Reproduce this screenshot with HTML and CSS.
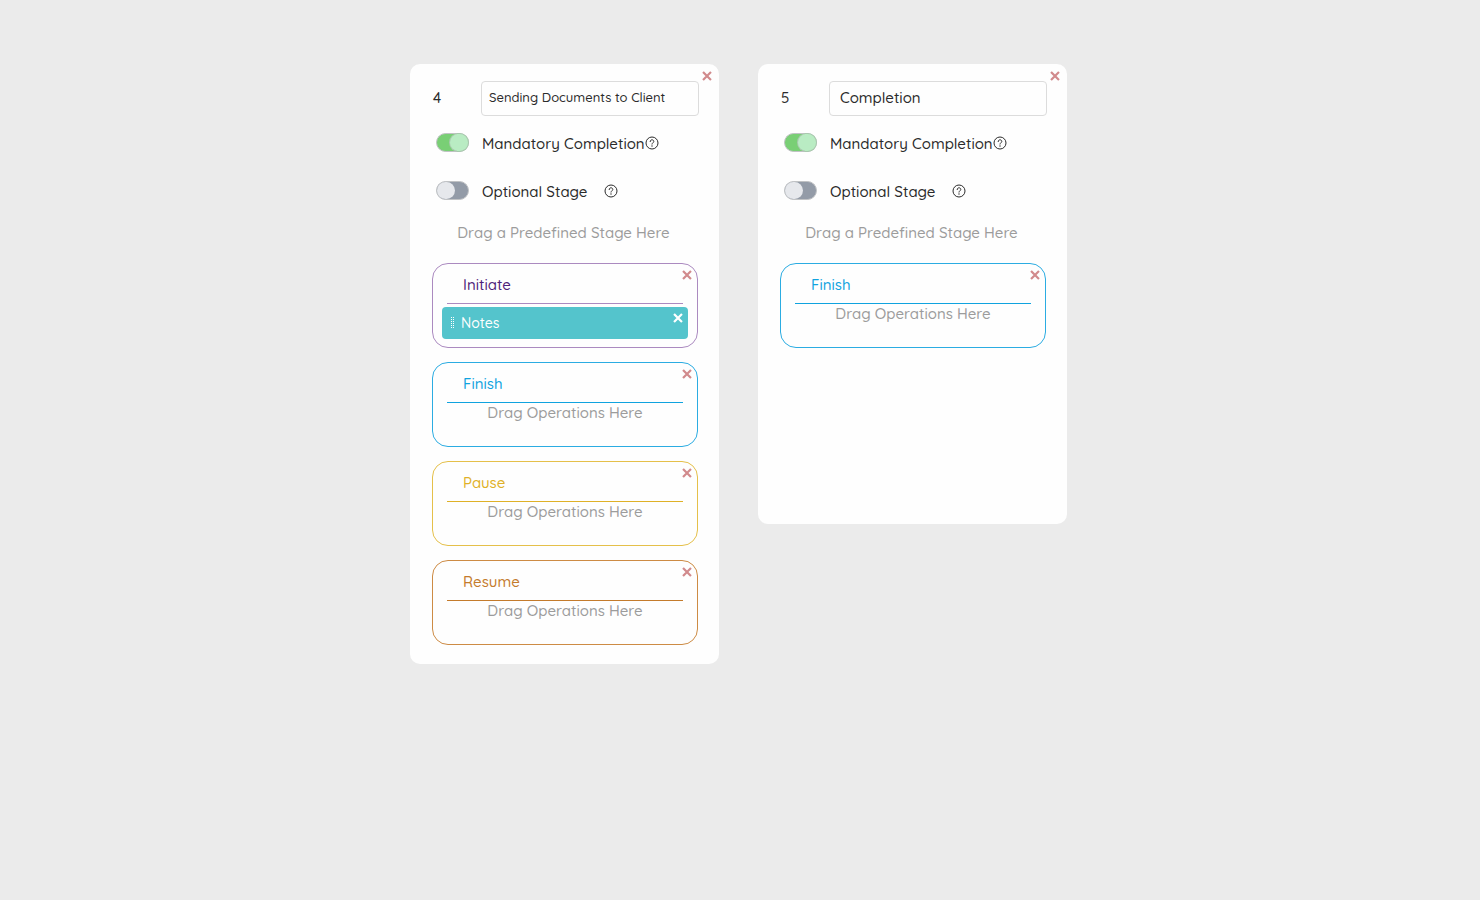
FILE: index.html
```html
<!DOCTYPE html>
<html lang="en">
	<head>
		<meta charset="UTF-8">
		<meta name="viewport" content="width=device-width, initial-scale=1.0">
		<title>Stages</title>
		<link rel="stylesheet" href="styles.css">
	</head>
	<body>
		<svg class="sprite" aria-hidden="true">
			<symbol id="icon-close" viewBox="0 0 10 10">
				<path d="M1.8 1.8 8.2 8.2M8.2 1.8 1.8 8.2" fill="none" stroke="currentColor" stroke-width="2.2" stroke-linecap="square"/>
			</symbol>
			<symbol id="icon-help" viewBox="0 0 14 14">
				<circle cx="7" cy="7" r="6" fill="none" stroke="currentColor"/>
				<path d="M5.2 5.6c0-1.1.8-1.8 1.8-1.8s1.8.7 1.8 1.6c0 1.3-1.7 1.4-1.8 2.7" fill="none" stroke="currentColor" stroke-linecap="round"/>
				<circle cx="7" cy="10" r=".7" fill="currentColor"/>
			</symbol>
			<symbol id="icon-grip" viewBox="0 0 5 12">
				<path d="M1.5 0v12M3.5 0v12" fill="none" stroke="currentColor" stroke-dasharray="1 1"/>
			</symbol>
		</svg>
		<main class="board">
			<section class="card">
				<button class="close card-close" type="button" aria-label="Remove stage 4"><svg><use href="#icon-close"/></svg></button>
				<div class="card-header">
					<label class="card-number" for="name_4">4</label>
					<input class="card-name card-name-long" id="name_4" type="text" value="Sending Documents to Client">
				</div>
				<div class="option">
					<input class="toggle" id="mandatory_4" type="checkbox" checked>
					<label class="option-label" for="mandatory_4">Mandatory Completion</label>
					<button class="help" type="button" aria-label="About mandatory completion"><svg><use href="#icon-help"/></svg></button>
				</div>
				<div class="option">
					<input class="toggle" id="optional_4" type="checkbox">
					<label class="option-label" for="optional_4">Optional Stage</label>
					<button class="help" type="button" aria-label="About optional stage"><svg><use href="#icon-help"/></svg></button>
				</div>
				<p class="card-hint">Drag a Predefined Stage Here</p>
				<div class="stages">
					<div class="stage stage-initiate">
						<button class="close stage-close" type="button" aria-label="Remove Initiate"><svg><use href="#icon-close"/></svg></button>
						<h2 class="stage-title">Initiate</h2>
						<div class="operation">
							<svg class="grip"><use href="#icon-grip"/></svg>
							<span class="operation-name">Notes</span>
							<button class="close operation-close" type="button" aria-label="Remove Notes"><svg><use href="#icon-close"/></svg></button>
						</div>
					</div>
					<div class="stage stage-finish">
						<button class="close stage-close" type="button" aria-label="Remove Finish"><svg><use href="#icon-close"/></svg></button>
						<h2 class="stage-title">Finish</h2>
						<p class="stage-hint">Drag Operations Here</p>
					</div>
					<div class="stage stage-pause">
						<button class="close stage-close" type="button" aria-label="Remove Pause"><svg><use href="#icon-close"/></svg></button>
						<h2 class="stage-title">Pause</h2>
						<p class="stage-hint">Drag Operations Here</p>
					</div>
					<div class="stage stage-resume">
						<button class="close stage-close" type="button" aria-label="Remove Resume"><svg><use href="#icon-close"/></svg></button>
						<h2 class="stage-title">Resume</h2>
						<p class="stage-hint">Drag Operations Here</p>
					</div>
				</div>
			</section>
			<section class="card">
				<button class="close card-close" type="button" aria-label="Remove stage 5"><svg><use href="#icon-close"/></svg></button>
				<div class="card-header">
					<label class="card-number" for="name_5">5</label>
					<input class="card-name" id="name_5" type="text" value="Completion">
				</div>
				<div class="option">
					<input class="toggle" id="mandatory_5" type="checkbox" checked>
					<label class="option-label" for="mandatory_5">Mandatory Completion</label>
					<button class="help" type="button" aria-label="About mandatory completion"><svg><use href="#icon-help"/></svg></button>
				</div>
				<div class="option">
					<input class="toggle" id="optional_5" type="checkbox">
					<label class="option-label" for="optional_5">Optional Stage</label>
					<button class="help" type="button" aria-label="About optional stage"><svg><use href="#icon-help"/></svg></button>
				</div>
				<p class="card-hint">Drag a Predefined Stage Here</p>
				<div class="stages">
					<div class="stage stage-finish">
						<button class="close stage-close" type="button" aria-label="Remove Finish"><svg><use href="#icon-close"/></svg></button>
						<h2 class="stage-title">Finish</h2>
						<p class="stage-hint">Drag Operations Here</p>
					</div>
				</div>
			</section>
		</main>
	</body>
</html>
```
FILE: styles.css
```css
* {
	box-sizing: border-box;
}
body {
	margin: 0;
	background: #ebebeb;
	color: #2b2b2b;
	font-family: Quicksand, Comfortaa, Inter, sans-serif;
	font-size: 15px;
	font-weight: 500;
	line-height: 20px;
}
.sprite {
	display: none;
}
.board {
	display: grid;
	grid-template-columns: repeat(2, minmax(0, 309px));
	gap: 39px;
	justify-content: center;
	align-items: start;
	padding: 64px 18px 64px 15px;
}
.card {
	position: relative;
	min-height: 460px;
	padding: 17px 20px 19px 22px;
	background: #fefefe;
	border-radius: 10px;
}
.card-header {
	display: flex;
	align-items: center;
	margin-bottom: 14px;
}
.card-number {
	flex: 0 0 49px;
	padding: 0 0 2px 1px;
}
.card-name {
	flex: 1;
	min-width: 0;
	height: 35px;
	padding: 0 10px 3px;
	border: 1px solid #dcdcdc;
	border-radius: 4px;
	background: #fefefe;
	color: inherit;
	font: inherit;
}
.card-name-long {
	padding-left: 7px;
	font-size: 13px;
}
.option {
	display: flex;
	align-items: center;
	height: 24px;
	margin-bottom: 24px;
	padding-left: 4px;
}
.toggle {
	appearance: none;
	flex: none;
	width: 33px;
	height: 19px;
	margin: 0 13px 0 0;
	border: 1px solid #c0c2c4;
	border-radius: 10px;
	background: #939ba7;
}
.toggle::before {
	content: "";
	display: block;
	width: 18px;
	height: 17px;
	border-radius: 9px;
	background: #e6e8ec;
}
.toggle:checked {
	background: #79cf75;
}
.toggle:checked::before {
	margin-left: auto;
	background: #b9ecc3;
	box-shadow: 0 0 0 1px #a9c9ae;
}
.option-label {
	min-width: 122px;
	padding-top: 4px;
}
.help {
	display: flex;
	padding: 2px 0 0;
	border: 0;
	background: none;
	color: #2b2b2b;
}
.help svg {
	width: 14px;
	height: 14px;
}
.card-hint,
.stage-hint {
	margin: 0;
	color: #9c9c9c;
	text-align: center;
}
.card-hint {
	margin: -3px 4px 20px 0;
}
.stages {
	display: grid;
	gap: 14px;
	margin-right: 1px;
}
.stage {
	position: relative;
	min-height: 85px;
	padding: 0 9px 8px;
	border: 1px solid;
	border-radius: 16px;
}
.stage-title {
	margin: 0 5px;
	padding: 11px 16px 8px;
	border-bottom: 1px solid;
	font-size: 15px;
	font-weight: 500;
	line-height: 20px;
}
.stage-initiate {
	border-color: #ab8ac0;
}
.stage-initiate .stage-title {
	border-color: #ab8ac0;
	color: #4f1f7a;
}
.stage-finish {
	border-color: #2bace2;
}
.stage-finish .stage-title {
	color: #10a3df;
}
.stage-pause {
	border-color: #e5c04a;
}
.stage-pause .stage-title {
	color: #dfb127;
}
.stage-resume {
	border-color: #cd8b44;
}
.stage-resume .stage-title {
	color: #c47b2c;
}
.operation {
	display: flex;
	align-items: center;
	height: 32px;
	margin-top: 3px;
	padding: 0 5px 0 8px;
	border-radius: 4px;
	background: #54c4cc;
	color: #fff;
	font-size: 14px;
}
.grip {
	width: 5px;
	height: 12px;
	margin-right: 6px;
}
.operation-name {
	flex: 1;
}
.close {
	display: flex;
	padding: 0;
	border: 0;
	background: none;
	color: #d18a8c;
}
.close svg {
	width: 10px;
	height: 10px;
}
.card-close {
	position: absolute;
	top: 7px;
	right: 7px;
}
.stage-close {
	position: absolute;
	top: 6px;
	right: 5px;
}
.operation-close {
	align-self: flex-start;
	margin-top: 6px;
	color: #fff;
}
```
